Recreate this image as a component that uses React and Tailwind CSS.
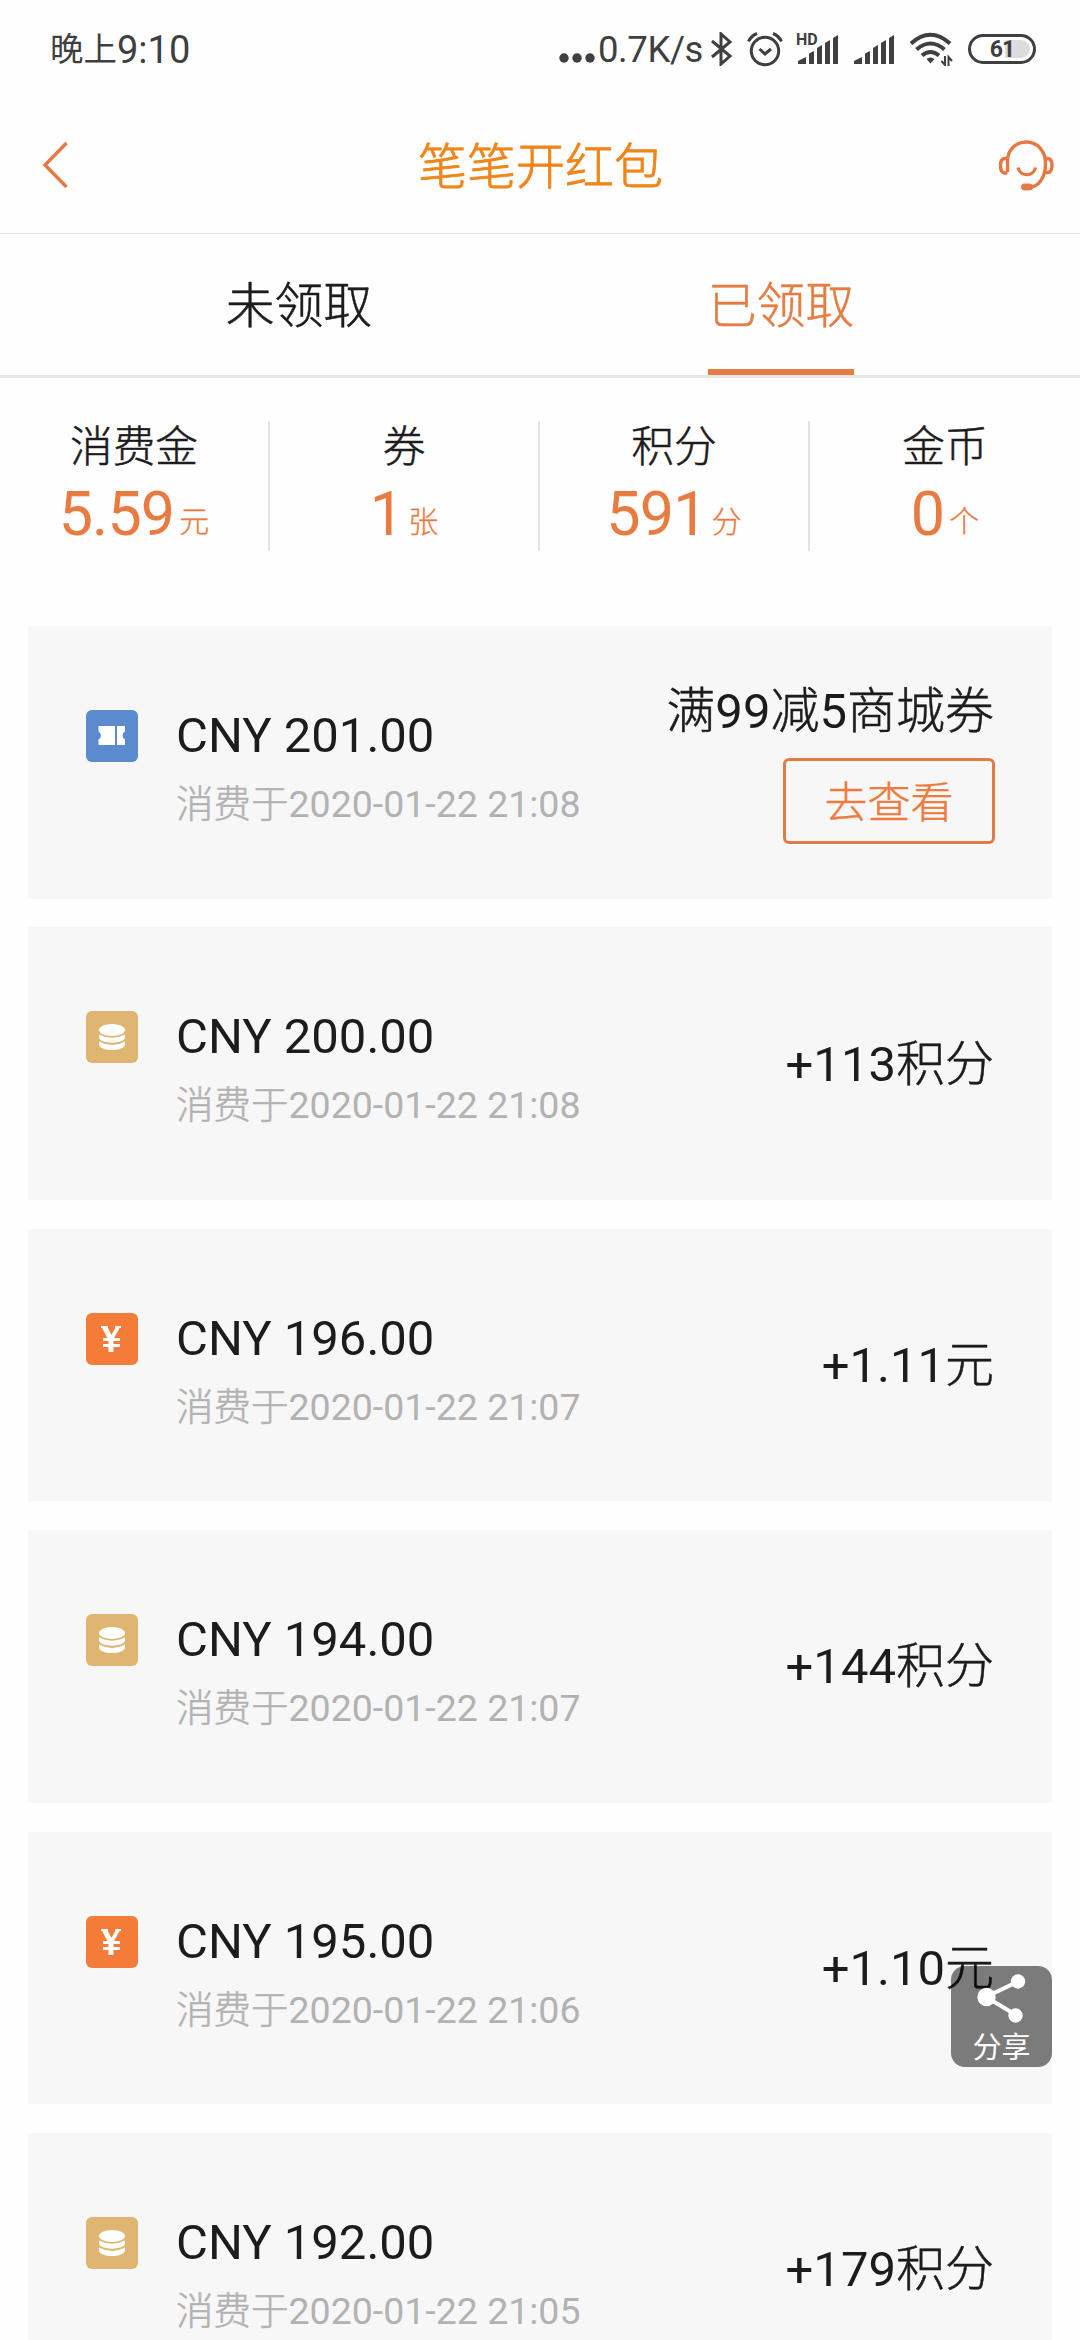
import React from 'react';

const records = [
  { type: 'coupon', amount: '201.00', time: '2020-01-22 21:08', reward: '满99减5商城券', action: '去查看' },
  { type: 'points', amount: '200.00', time: '2020-01-22 21:08', reward: '+113积分' },
  { type: 'cash', amount: '196.00', time: '2020-01-22 21:07', reward: '+1.11元' },
  { type: 'points', amount: '194.00', time: '2020-01-22 21:07', reward: '+144积分' },
  { type: 'cash', amount: '195.00', time: '2020-01-22 21:06', reward: '+1.10元' },
  { type: 'points', amount: '192.00', time: '2020-01-22 21:05', reward: '+179积分' },
];

const stats = [
  { label: '消费金', value: '5.59', unit: '元' },
  { label: '券', value: '1', unit: '张' },
  { label: '积分', value: '591', unit: '分' },
  { label: '金币', value: '0', unit: '个' },
];

// Chinese runs are set lighter than the digits beside them
const MixedText = ({ children }) =>
  children.split(/([\u4e00-\u9fff]+)/).map((part, i) =>
    i % 2 ? (
      <span key={i} className="font-light [-webkit-text-stroke:0.5px_currentColor]">{part}</span>
    ) : (
      part
    )
  );

const Signal = () => (
  <svg className="h-[29px] w-[40px] shrink-0" viewBox="0 0 40 29" fill="#3f3f3f">
    <path d="M0 29v-3l8-4v7z" />
    <path d="M11 29V18.500l5-2.500v13z" />
    <path d="M19 29V13l5-3v19z" />
    <path d="M27 29V8l5-3v24z" />
    <path d="M35 29V3l5-3v29z" />
  </svg>
);

const StatusBar = () => (
  <div className="flex h-[98px] items-center pl-[50px] pr-[44px] text-[#3f3f3f]">
    <div className="flex items-center pt-[2px] leading-none">
      <span className="text-[33.500px]">晚上</span>
      <span className="text-[38px]">9:10</span>
    </div>
    <div className="ml-auto flex items-center">
      <svg className="mt-[17px] h-[10px] w-[36px]" viewBox="0 0 36 10" fill="#3f3f3f">
        <circle cx="5" cy="5" r="4.700" />
        <circle cx="18" cy="5" r="4.700" />
        <circle cx="31" cy="5" r="4.700" />
      </svg>
      <span className="ml-[3px] w-[107px] whitespace-nowrap pt-[2px] text-[36.500px] leading-none tracking-[-0.4px]">0.7K/s</span>
      <svg className="ml-[6px] h-[34px] w-[22px]" viewBox="0 0 22 34" fill="none" stroke="#3f3f3f" strokeWidth="3">
        <path d="M1 9l18 15-9 8V2l9 8L1 25" />
      </svg>
      <svg className="ml-[14px] h-[36px] w-[36px]" viewBox="0 0 36 36" fill="none" stroke="#3f3f3f" strokeWidth="3">
        <circle cx="18" cy="20" r="13.700" />
        <path d="M12.500 18l5.500 5 6-5" />
        <path d="M1.500 10.500Q4 5 10 2.500M34.500 10.500Q32 5 26 2.500" />
      </svg>
      <div className="relative ml-[15px] flex">
        <Signal />
        <span className="absolute -left-[2px] -top-[3px] text-[16px] font-bold leading-none">HD</span>
      </div>
      <div className="ml-[16px] flex">
        <Signal />
      </div>
      <svg className="ml-[15px] h-[34px] w-[44px]" viewBox="0 0 44 34" fill="none" stroke="#3f3f3f" strokeWidth="4">
        <path d="M2 11.500Q21.500-6 41 11.500" />
        <path d="M7.500 17.500Q21.500 5.500 35.500 17.500" />
        <path d="M13 23.500Q21.500 16.500 30 23.500" />
        <path d="M17.500 27q4-3 8 0l-4 4.500z" fill="#3f3f3f" stroke="none" />
        <path d="M36 24v9l-3.500-4M39.500 34v-9l3.500 4" strokeWidth="2" />
      </svg>
      <div className="ml-[15px] flex h-[30px] w-[68px] rounded-full border-[3px] border-[#3f3f3f] p-[3px]">
        <div className="flex w-full items-center justify-center rounded-full bg-linear-to-r from-white from-55% to-[#dcdcdc] to-55% text-[23px] font-bold leading-none tracking-[-1px]">
          61
        </div>
      </div>
    </div>
  </div>
);

const Header = () => (
  <div className="flex h-[136px] items-center border-b border-[#e3e3e3] pl-[40px] pr-[26px]">
    <svg className="h-[48px] w-[56px]" viewBox="0 0 56 48" fill="none" stroke="#e67842" strokeWidth="3.400">
      <path d="M26.500 1L5 23l21.500 22" />
    </svg>
    <h1 className="flex-1 pr-[13px] pt-[3px] text-center text-[49px] leading-none font-light text-[#f08519] [-webkit-text-stroke:0.8px_currentColor]">
      笔笔开红包
    </h1>
    <svg className="h-[54px] w-[56px]" viewBox="0 0 56 54" fill="none" stroke="#e67842" strokeWidth="3.400">
      <path d="M9.500 33V22C9.500 11 17.500 3 28.500 3S47.500 12 47.500 25C47.500 39 40 48 32 48" />
      <path d="M9.500 19.500H7c-3 0-4.500 2.500-4.500 7S4 34 7 34h2.500" />
      <path d="M47.500 19.500h2c3 0 4.500 2.500 4.500 7S52.500 33.500 49.500 33.500h-3" />
      <path d="M20 28.500c2 9.500 15.500 9.500 17.500 0" />
      <rect x="23.500" y="45" width="11" height="6" rx="2.500" fill="#e67842" strokeWidth="0.800" />
    </svg>
  </div>
);

const Tabs = () => (
  <div className="flex h-[144px] border-b-[3px] border-[#e6e6e6] px-[58px] text-[48.800px] font-light [-webkit-text-stroke:0.5px_currentColor]">
    <div className="flex flex-1 justify-center">
      <span className="flex items-center border-b-[6px] border-transparent pt-[11px]">未领取</span>
    </div>
    <div className="flex flex-1 justify-center text-[#e57d42]">
      <span className="flex items-center border-b-[6px] border-[#e57d42] pt-[11px]">已领取</span>
    </div>
  </div>
);

const Stats = () => (
  <div className="mt-[43px] grid h-[130px] grid-cols-4 divide-x-2 divide-[#e3e3e3]">
    {stats.map(({ label, value, unit }) => (
      <div key={label} className="flex flex-col items-center">
        <span className="mt-px text-[42.700px] leading-[51px] font-light [-webkit-text-stroke:0.5px_currentColor]">{label}</span>
        <div className="mt-[8px] flex items-baseline text-[#e97b40]">
          <span className="text-[61px] leading-[66px] tracking-[-0.8px]">{value}</span>
          <span className="relative -top-[3px] ml-[5px] text-[30px] leading-none font-light [-webkit-text-stroke:0.3px_currentColor]">{unit}</span>
        </div>
      </div>
    ))}
  </div>
);

const CouponIcon = () => (
  <svg className="h-full w-full" viewBox="0 0 52 52" fill="#fff">
    <path d="M12.500 16H29v19H12.500v-5.500a4.500 4.500 0 000-8z" />
    <path d="M31 16h8v5.500a4.500 4.500 0 000 8V35h-8z" />
  </svg>
);

const PointsIcon = () => (
  <svg className="h-full w-full" viewBox="0 0 52 52" fill="#fff">
    <ellipse cx="26" cy="19" rx="13" ry="6" />
    <path d="M13 23.500q13 6.500 26 0v2.500c0 7.500-26 7.500-26 0z" />
    <path d="M13 30.500q13 7 26 0v2.500c0 8-26 8-26 0z" />
  </svg>
);

const CashIcon = () => (
  <svg className="h-full w-full" viewBox="0 0 52 52" fill="none" stroke="#fff">
    <path d="M18.500 14l6.500 12.500V39" strokeWidth="5" />
    <path d="M32 14l-7 12.500" strokeWidth="3.600" />
    <path d="M17 26.500h17M17 32.500h17" strokeWidth="3" />
    <path d="M15 14h7M29 14h6" strokeWidth="2" />
  </svg>
);

const icons = {
  coupon: { Icon: CouponIcon, bg: 'bg-[#5b8bce]' },
  points: { Icon: PointsIcon, bg: 'bg-[#deb672]' },
  cash: { Icon: CashIcon, bg: 'bg-[#f57c38]' },
};

const RecordCard = ({ type, amount, time, reward, action }) => {
  const { Icon, bg } = icons[type];
  return (
    <div className="flex h-[272.600px] shrink-0 bg-[#f7f7f7] px-[58px]">
      <div className={`mt-[84px] h-[52px] w-[52px] shrink-0 rounded-[6px] ${bg}`}>
        <Icon />
      </div>
      <div className="ml-[38px] mt-[80px]">
        <p className="text-[49px] leading-[60px]">CNY {amount}</p>
        <p className="mt-[14px] text-[37.500px] leading-[48px] text-[#b2b2b2]">
          <MixedText>{`消费于${time}`}</MixedText>
        </p>
      </div>
      <div className="ml-auto flex flex-col items-end justify-center">
        <span className="pt-[2px] text-[49px] leading-[60px]">
          <MixedText>{reward}</MixedText>
        </span>
        {action && (
          <button className="mt-[16px] -mr-px h-[86px] w-[212px] rounded-[6px] border-[3px] border-[#df7c46] pt-[4px] text-[43px] leading-none font-light text-[#ee7a3c] [-webkit-text-stroke:0.4px_currentColor]">
            {action}
          </button>
        )}
      </div>
    </div>
  );
};

const ShareButton = () => (
  <div className="absolute left-[951px] top-[1966px] flex h-[101px] w-[101px] flex-col items-center rounded-[14px] bg-black/50 text-white">
    <svg className="mt-[5px] h-[56px] w-[60px]" viewBox="0 0 60 56" fill="#fff" stroke="#fff" strokeWidth="4">
      <path d="M46 10.500L14 26l30 18" fill="none" />
      <circle cx="14.500" cy="26" r="9.200" stroke="none" />
      <circle cx="46" cy="10.500" r="7.200" stroke="none" />
      <circle cx="43.500" cy="44.500" r="7.200" stroke="none" />
    </svg>
    <span className="mt-[5px] text-[29px] leading-[32px]">分享</span>
  </div>
);

const App = () => {
  return (
    <div className="relative h-[2340px] w-[1080px] overflow-hidden bg-[#fefefe] font-['Roboto','Noto_Sans_CJK_SC',sans-serif] text-[#1c1c1c]">
      <StatusBar />
      <Header />
      <Tabs />
      <Stats />
      <div className="mt-[75px] flex flex-col gap-[28.800px] px-[28px]">
        {records.map((record) => (
          <RecordCard key={record.amount} {...record} />
        ))}
      </div>
      <ShareButton />
    </div>
  );
};

export default App;
